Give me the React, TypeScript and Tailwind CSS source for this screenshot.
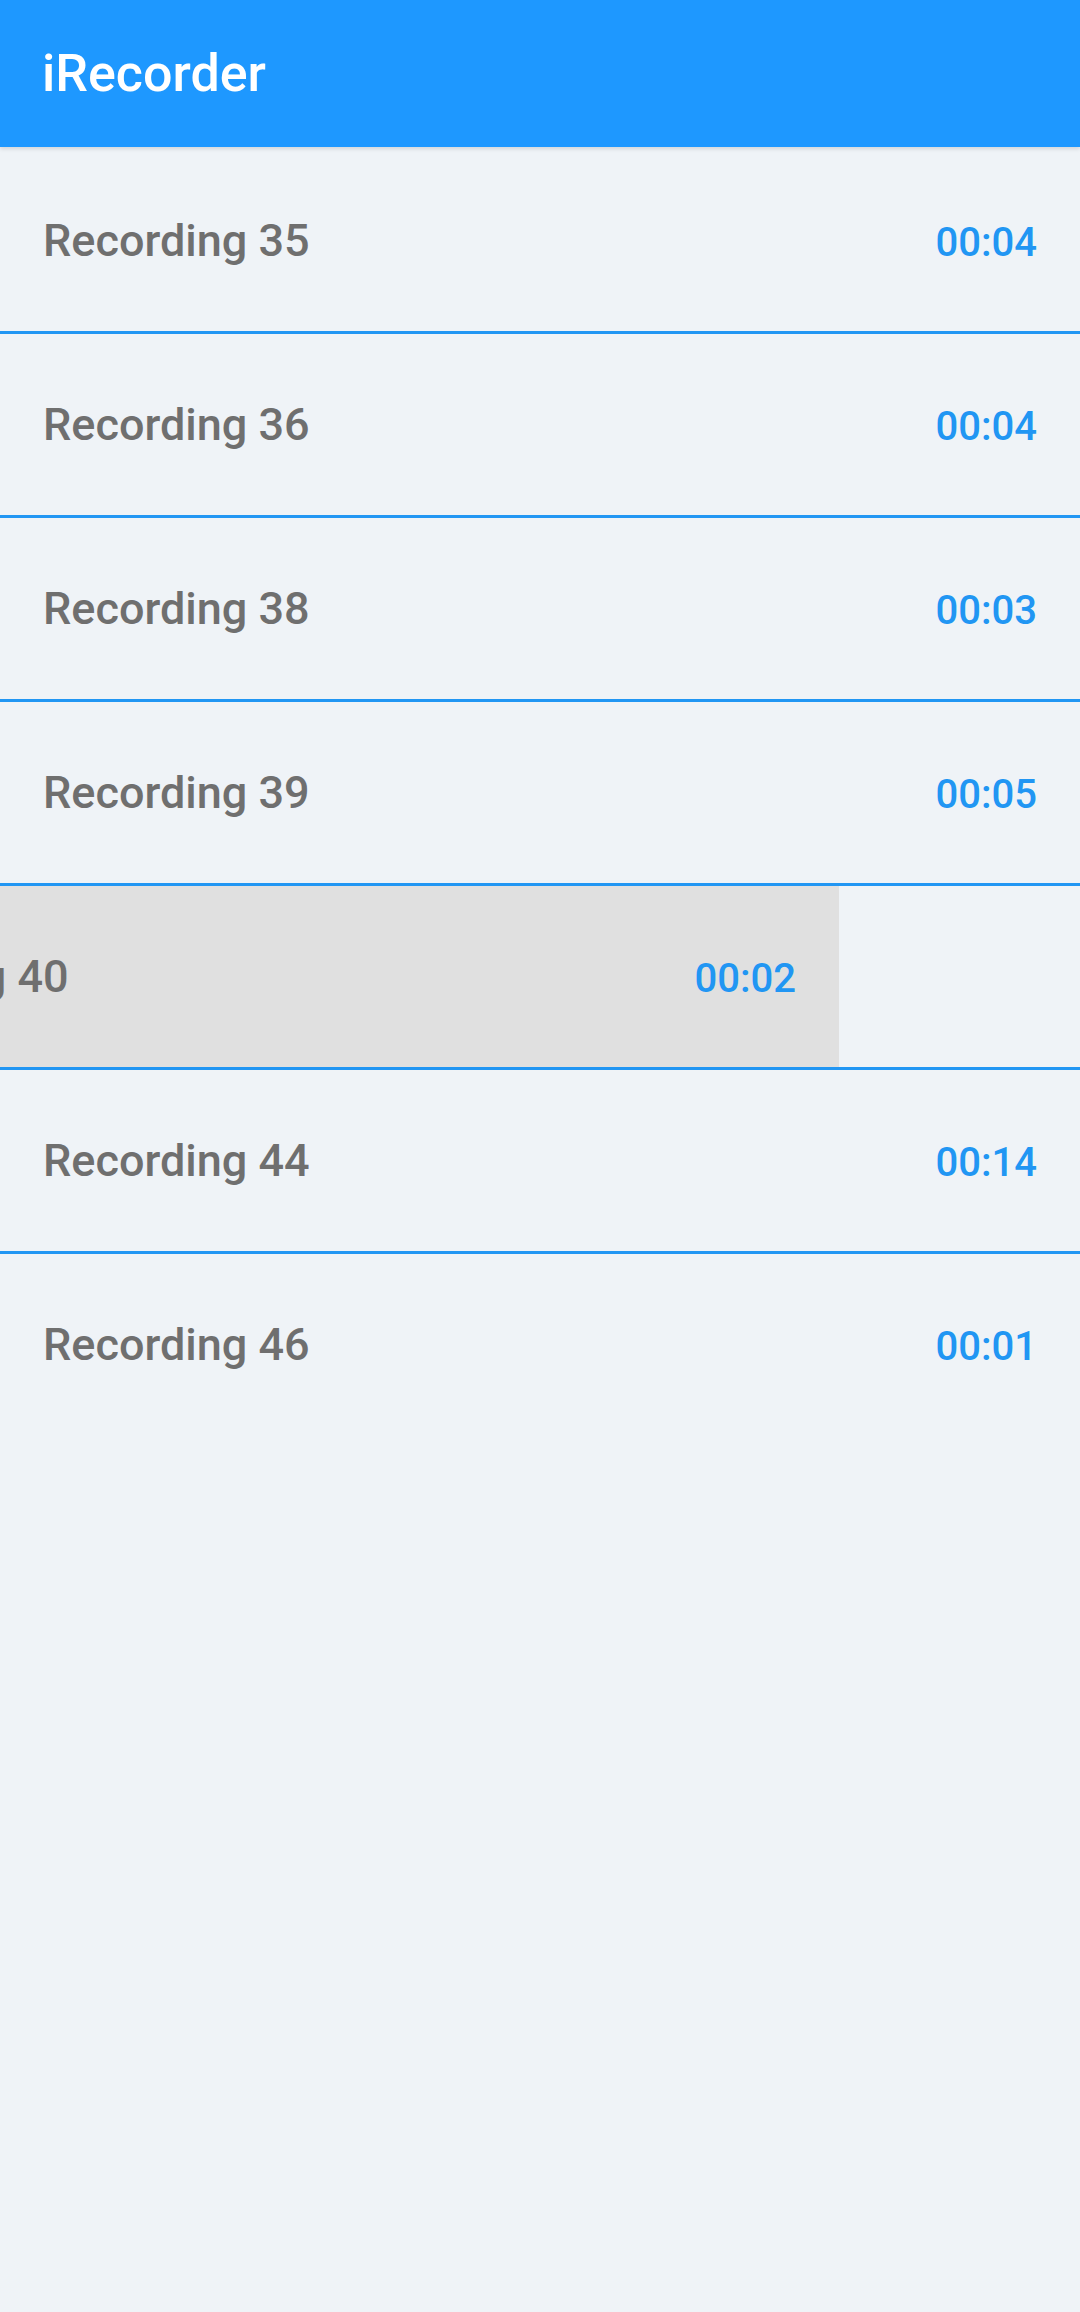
const RECORDINGS = [
  { id: 35, name: 'Recording 35', duration: '00:04' },
  { id: 36, name: 'Recording 36', duration: '00:04' },
  { id: 38, name: 'Recording 38', duration: '00:03' },
  { id: 39, name: 'Recording 39', duration: '00:05' },
  { id: 40, name: 'Recording 40', duration: '00:02', swiped: true },
  { id: 44, name: 'Recording 44', duration: '00:14' },
  { id: 46, name: 'Recording 46', duration: '00:01', last: true },
];

export default function App() {
  return (
    <div className="min-h-[2312px] w-[1080px] bg-[#eff3f7] font-['Roboto','Liberation_Sans',Arial,sans-serif]">
      <div className="relative z-10 flex h-[147px] items-center bg-[#1e98ff] pl-[42px] shadow-[0_2px_4px_rgba(0,0,0,0.12)]">
        <h1 className="text-[52px] font-medium leading-none text-white">iRecorder</h1>
      </div>

      <div className="mt-[3px]">
        {RECORDINGS.map(rec => (
          <div
            key={rec.id}
            className={`h-[184px] overflow-hidden ${rec.last ? '' : 'border-b-[3px] border-[#2196f3]'}`}
          >
            {/* swiped row slides left to reveal the background */}
            <div
              className={`flex h-[181px] w-full items-center px-[43px] ${
                rec.swiped ? '-translate-x-[241px] bg-[#e0e0e0]' : ''
              }`}
            >
              <div className="flex w-full items-baseline justify-between">
                <span className="whitespace-nowrap text-[45px] font-medium leading-none text-[#6f6f6f]">{rec.name}</span>
                <span className="text-[40px] font-medium leading-none text-[#2196f3]">{rec.duration}</span>
              </div>
            </div>
          </div>
        ))}
      </div>
    </div>
  );
}
